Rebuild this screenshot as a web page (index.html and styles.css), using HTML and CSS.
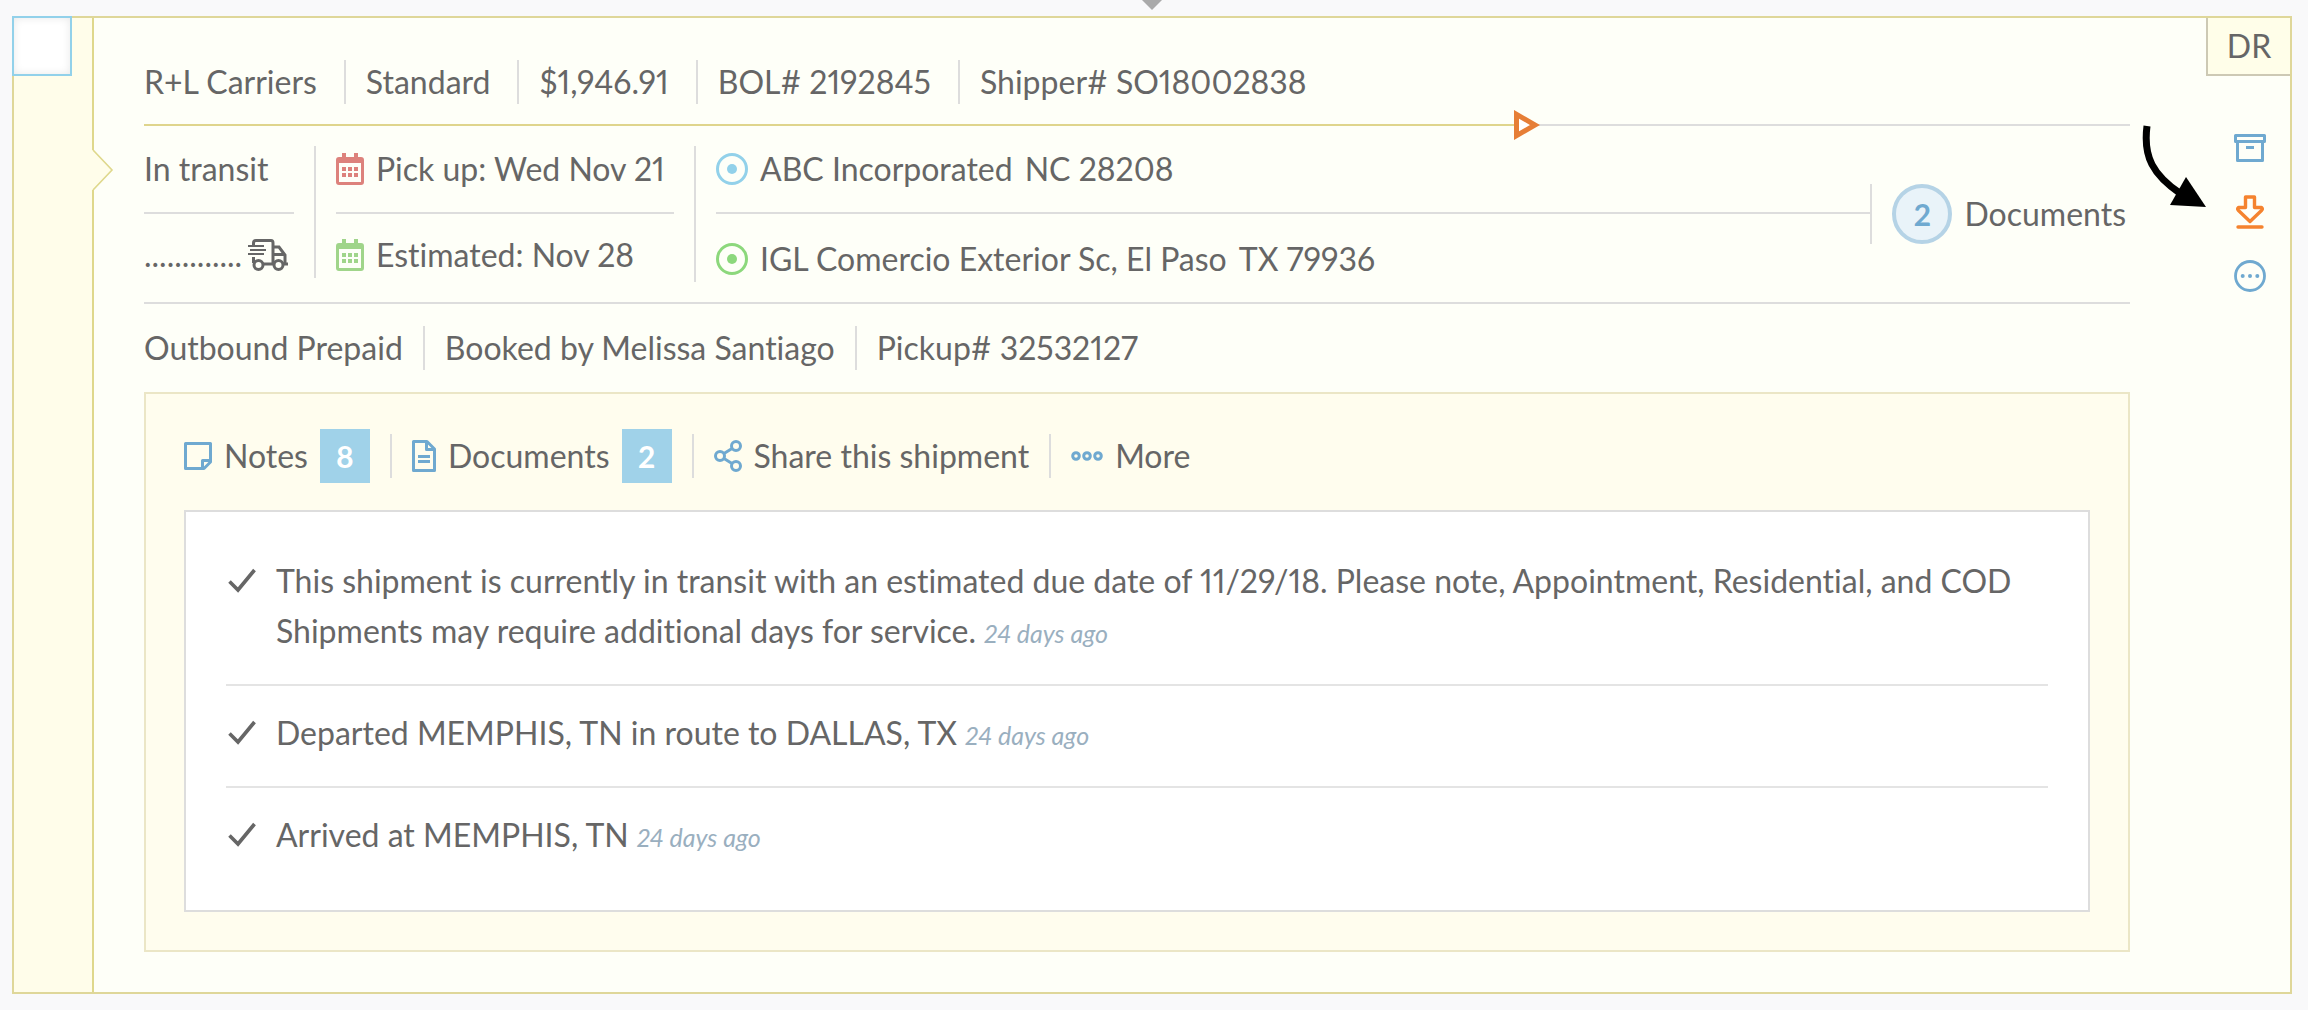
FILE: index.html
```html
<!DOCTYPE html>
<html lang="en">
<head>
  <meta charset="UTF-8" />
  <meta name="viewport" content="width=device-width, initial-scale=1" />
  <title>Shipment SO18002838</title>
  <link rel="stylesheet" href="styles.css">
</head>
<body>

<div class="top-pointer"></div>

<article class="shipment">
  <!-- Left strip with the select box -->
  <div class="strip">
    <input type="checkbox" class="select-box" aria-label="Select shipment" />
    <svg class="strip-notch" width="22" height="40" viewBox="0 0 22 40">
      <path d="M0 0H1L20 20L1 40H0Z" fill="#fffdea" />
      <path d="M1 0L20 20L1 40" fill="none" stroke="#dfd88c" stroke-width="1.6" />
    </svg>
  </div>

  <div class="details">
    <ul class="facts facts-main">
      <li>R+L Carriers</li>
      <li>Standard</li>
      <li>$1,946.91</li>
      <li>BOL# 2192845</li>
      <li>Shipper# SO18002838</li>
    </ul>

    <!-- How far along the shipment is -->
    <div class="progress">
      <div class="progress-done" style="width: 69%"></div>
      <svg width="26" height="30" viewBox="0 0 26 30">
        <path d="M2.5 4.3V25.7L21 15Z" fill="#fff" stroke="#e67e36" stroke-width="5" />
      </svg>
    </div>

    <div class="route">
      <div class="route-status">
        <div class="route-cell">In transit</div>
        <div class="route-cell">
          <span>.............</span>
          <svg width="40" height="32" viewBox="0 0 40 32" fill="none" stroke="#666" stroke-width="3">
            <path d="M5.5 6V4Q5.5 1.5 8 1.5H23Q25 1.5 25 4V25M5.5 18V24M15 25H26M25 8H31L37 16V25H40M35 25H37M25 15.5H37" />
            <path d="M0 7H16M2 11H18M0 15H16" stroke-width="2" />
            <circle cx="10.5" cy="26" r="4.5" />
            <circle cx="30.5" cy="26" r="4.5" />
          </svg>
        </div>
      </div>

      <div class="route-dates">
        <div class="route-cell">
          <svg width="28" height="32" viewBox="0 0 28 32">
            <path fill="#dd827c" fill-rule="evenodd" d="M6 0H10V4H18V0H22V4H25Q28 4 28 7V29Q28 32 25 32H3Q0 32 0 29V7Q0 4 3 4H6ZM3 10V29H25V10ZM6 14H10V18H6ZM12 14H16V18H12ZM18 14H22V18H18ZM6 20H10V24H6ZM12 20H16V24H12ZM18 20H22V24H18Z" />
          </svg>
          <span>Pick up: Wed Nov 21</span>
        </div>
        <div class="route-cell">
          <svg width="28" height="32" viewBox="0 0 28 32">
            <path fill="#a0d58a" fill-rule="evenodd" d="M6 0H10V4H18V0H22V4H25Q28 4 28 7V29Q28 32 25 32H3Q0 32 0 29V7Q0 4 3 4H6ZM3 10V29H25V10ZM6 14H10V18H6ZM12 14H16V18H12ZM18 14H22V18H18ZM6 20H10V24H6ZM12 20H16V24H12ZM18 20H22V24H18Z" />
          </svg>
          <span>Estimated: Nov 28</span>
        </div>
      </div>

      <div class="route-places">
        <div class="route-cell">
          <svg width="32" height="32" viewBox="0 0 32 32">
            <circle cx="16" cy="16" r="14.5" fill="none" stroke="#92d1ea" stroke-width="3" />
            <circle cx="16" cy="16" r="5" fill="#92d1ea" />
          </svg>
          <span>ABC Incorporated</span>
          <span>NC 28208</span>
        </div>
        <div class="route-cell">
          <svg width="32" height="32" viewBox="0 0 32 32">
            <circle cx="16" cy="16" r="14.5" fill="none" stroke="#8cd87c" stroke-width="3" />
            <circle cx="16" cy="16" r="5" fill="#8cd87c" />
          </svg>
          <span>IGL Comercio Exterior Sc, El Paso</span>
          <span>TX 79936</span>
        </div>
      </div>

      <a href="#documents" class="route-docs">
        <span class="count">2</span>
        <span>Documents</span>
      </a>
    </div>

    <ul class="facts facts-booking">
      <li>Outbound Prepaid</li>
      <li>Booked by Melissa Santiago</li>
      <li>Pickup# 32532127</li>
    </ul>

    <section class="panel">
      <nav class="tabs">
        <button type="button" class="tab">
          <svg width="28" height="28" viewBox="0 0 28 28" fill="none" stroke="#6fa9d0" stroke-width="3" stroke-linejoin="round">
            <path d="M1.5 1.5H26.5V20L20 26.5H1.5ZM26.5 18.5H18.5V26.5" />
          </svg>
          <span>Notes</span>
          <span class="badge">8</span>
        </button>
        <button type="button" class="tab" id="documents">
          <svg width="24" height="32" viewBox="0 0 24 32" fill="none" stroke="#6fa9d0" stroke-width="3" stroke-linejoin="round">
            <path d="M1.5 1.5H15L22.5 9V30.5H1.5ZM14.5 1.5V9.5H22.5M6 16.5H18M6 21.5H18" />
          </svg>
          <span>Documents</span>
          <span class="badge">2</span>
        </button>
        <button type="button" class="tab">
          <svg width="28" height="32" viewBox="0 0 28 32" fill="none" stroke="#6fa9d0" stroke-width="3">
            <circle cx="6" cy="16" r="4.5" />
            <circle cx="22" cy="6" r="4.5" />
            <circle cx="22" cy="26" r="4.5" />
            <path d="M10 13.5L18 8.5M10 18.5L18 23.5" />
          </svg>
          <span>Share this shipment</span>
        </button>
        <button type="button" class="tab">
          <svg width="32" height="10" viewBox="0 0 32 10" fill="none" stroke="#6fa9d0" stroke-width="3">
            <circle cx="5" cy="5" r="3.3" />
            <circle cx="16" cy="5" r="3.3" />
            <circle cx="27" cy="5" r="3.3" />
          </svg>
          <span>More</span>
        </button>
      </nav>

      <ul class="events">
        <li class="event">
          <svg width="28" height="50" viewBox="0 0 28 50">
            <path d="M1.5 25.5L10 34L26.5 14" fill="none" stroke="#666" stroke-width="3.6" />
          </svg>
          <p>This shipment is currently in transit with an estimated due date of 11/29/18. Please note, Appointment, Residential, and COD Shipments may require additional days for service. <time>24 days ago</time></p>
        </li>
        <li class="event">
          <svg width="28" height="50" viewBox="0 0 28 50">
            <path d="M1.5 25.5L10 34L26.5 14" fill="none" stroke="#666" stroke-width="3.6" />
          </svg>
          <p>Departed MEMPHIS, TN in route to DALLAS, TX <time>24 days ago</time></p>
        </li>
        <li class="event">
          <svg width="28" height="50" viewBox="0 0 28 50">
            <path d="M1.5 25.5L10 34L26.5 14" fill="none" stroke="#666" stroke-width="3.6" />
          </svg>
          <p>Arrived at MEMPHIS, TN <time>24 days ago</time></p>
        </li>
      </ul>
    </section>
  </div>

  <!-- Right column: initials and actions -->
  <aside class="side">
    <div class="initials">DR</div>
    <div class="actions">
      <button type="button" class="action" aria-label="Archive">
        <svg width="32" height="28" viewBox="0 0 32 28" fill="none" stroke="#6fa9d0" stroke-width="3" stroke-linejoin="round">
          <path d="M1.5 1.5H30.5V7.5H1.5ZM3.5 7.5V26.5H28.5V7.5M12 13.5H20" />
        </svg>
      </button>
      <button type="button" class="action" aria-label="Download">
        <svg width="28" height="34" viewBox="0 0 28 34" fill="none" stroke="#f5832f" stroke-width="3.4" stroke-linejoin="round" stroke-linecap="round">
          <path d="M9.5 2H18.5V12.5H25.5Q27 14 25.5 15.5L14 26.5L2.5 15.5Q1 14 2.5 12.5H9.5ZM2 32H26" />
        </svg>
      </button>
      <button type="button" class="action" aria-label="More actions">
        <svg width="32" height="32" viewBox="0 0 32 32">
          <circle cx="16" cy="16" r="14.5" fill="none" stroke="#6fa9d0" stroke-width="2.8" />
          <g fill="#6fa9d0">
            <circle cx="8.7" cy="16" r="2" />
            <circle cx="16" cy="16" r="2" />
            <circle cx="23.3" cy="16" r="2" />
          </g>
        </svg>
      </button>
    </div>
    <svg class="callout" width="66" height="84" viewBox="0 0 66 84">
      <path d="M6 1C2 32 12 50 40 69" fill="none" stroke="#000" stroke-width="7" />
      <path d="M45 52L65 82L29 80Z" fill="#000" />
    </svg>
  </aside>
</article>

</body>
</html>
```

FILE: styles.css
```css
* {
  box-sizing: border-box;
}

body {
  margin: 0;
  padding: 0 16px 16px 12px;
  background: #f9f9fa;
  color: #666;
  font-family: Lato, "Open Sans", sans-serif;
  font-size: 32px;
  font-variant-ligatures: none;
  font-variant-numeric: proportional-nums;
  line-height: 44px;
}

ul {
  margin: 0;
  padding: 0;
  list-style: none;
}

p {
  margin: 0;
}

svg {
  display: block;
  flex: none;
}

a {
  color: inherit;
  text-decoration: none;
}

button {
  padding: 0;
  border: 0;
  background: none;
  color: inherit;
  font: inherit;
  cursor: pointer;
}

/* Small grey pointer above the card */
.top-pointer {
  width: 20px;
  height: 16px;
  margin: 0 auto;
  border: 10px solid transparent;
  border-top-color: #aaa;
  border-bottom: 0;
}

.shipment {
  display: flex;
  border: 2px solid #dfd799;
  background: #fefff8;
}

/* Left strip */
.strip {
  position: relative;
  flex: none;
  width: 80px;
  border-right: 2px solid #dfd88c;
  background: #fffdea;
}

.select-box {
  position: absolute;
  top: -2px;
  left: -2px;
  width: 60px;
  height: 60px;
  margin: 0;
  appearance: none;
  border: 2px solid #92d1ea;
  background: #fff;
  box-shadow: inset 0 0 8px #e8e8e8;
}

.strip-notch {
  position: absolute;
  top: 132px;
  left: 78px;
}

/* Main column */
.details {
  flex: 1;
  min-width: 0;
  padding: 42px 0 40px 50px;
}

.facts {
  display: flex;
}

.facts li + li {
  padding-left: 20px;
  border-left: 2px solid #ddd;
}

.facts-main li + li {
  margin-left: 27px;
}

.facts-booking {
  margin-top: 22px;
}

.facts-booking li + li {
  margin-left: 20px;
}

.progress {
  display: flex;
  align-items: center;
  height: 2px;
  margin-top: 20px;
  background: #ddd;
}

.progress-done {
  height: 2px;
  background: #dfd58c;
}

/* Route block, two rows split by a line */
.route {
  display: flex;
  align-items: flex-start;
  padding: 20px 0;
  border-bottom: 2px solid #ddd;
}

.route-cell {
  display: flex;
  align-items: center;
  gap: 12px;
  height: 66px;
  padding-bottom: 20px;
  white-space: nowrap;
}

.route-cell + .route-cell {
  padding-top: 18px;
  padding-bottom: 0;
  border-top: 2px solid #ddd;
}

.route-status {
  width: 150px;
}

.route-status .route-cell {
  gap: 6px;
}

.route-dates,
.route-places {
  position: relative;
  margin-left: 42px;
}

.route-dates {
  width: 338px;
}

.route-places {
  flex: 1;
}

.route-places .route-cell + .route-cell {
  height: 70px;
  padding-top: 22px;
}

.route-dates::before,
.route-places::before {
  content: "";
  position: absolute;
  top: 0;
  bottom: 0;
  left: -22px;
  border-left: 2px solid #ddd;
}

.route-docs {
  display: flex;
  align-items: center;
  gap: 12px;
  height: 60px;
  margin-top: 38px;
  padding: 0 4px 0 20px;
  border-left: 2px solid #ddd;
}

.count {
  width: 60px;
  height: 60px;
  border: 4px solid #b5d3e6;
  border-radius: 50%;
  background: #e9f3f9;
  color: #6fa9d0;
  font-size: 30px;
  font-weight: bold;
  line-height: 52px;
  text-align: center;
}

/* Notes and tracking panel */
.panel {
  margin-top: 22px;
  padding: 40px 38px 38px;
  border: 2px solid #ebe6c6;
  background: #fffdee;
}

.tabs {
  display: flex;
  align-items: center;
}

.tab {
  display: flex;
  align-items: center;
  gap: 12px;
  height: 44px;
}

.tab + .tab {
  margin-left: 20px;
  padding-left: 20px;
  border-left: 2px solid #ddd;
}

.badge {
  width: 50px;
  height: 54px;
  background: #a0d2e9;
  color: #fff;
  font-size: 30px;
  font-weight: bold;
  line-height: 54px;
  text-align: center;
}

.events {
  margin-top: 32px;
  padding: 22px 40px;
  border: 2px solid #ddd;
  background: #fff;
}

.event {
  display: flex;
  gap: 20px;
  padding: 22px 0 28px 2px;
  line-height: 50px;
}

.event + .event {
  border-top: 2px solid #e4e4e4;
}

.event time {
  color: #9aafbf;
  font-size: 25px;
  font-style: italic;
  line-height: 1;
}

/* Right column */
.side {
  position: relative;
  flex: none;
  display: flex;
  flex-direction: column;
  align-items: flex-end;
  width: 160px;
}

.initials {
  width: 84px;
  height: 58px;
  border-left: 2px solid #cdc9b4;
  border-bottom: 2px solid #cdc9b4;
  background: #fffee9;
  line-height: 56px;
  text-align: center;
}

.actions {
  display: flex;
  flex-direction: column;
  gap: 32px;
  margin: 56px 24px 0 0;
}

.action {
  display: flex;
  align-items: center;
  justify-content: center;
  width: 32px;
  height: 32px;
}

.callout {
  position: absolute;
  top: 107px;
  left: 11px;
}
```
